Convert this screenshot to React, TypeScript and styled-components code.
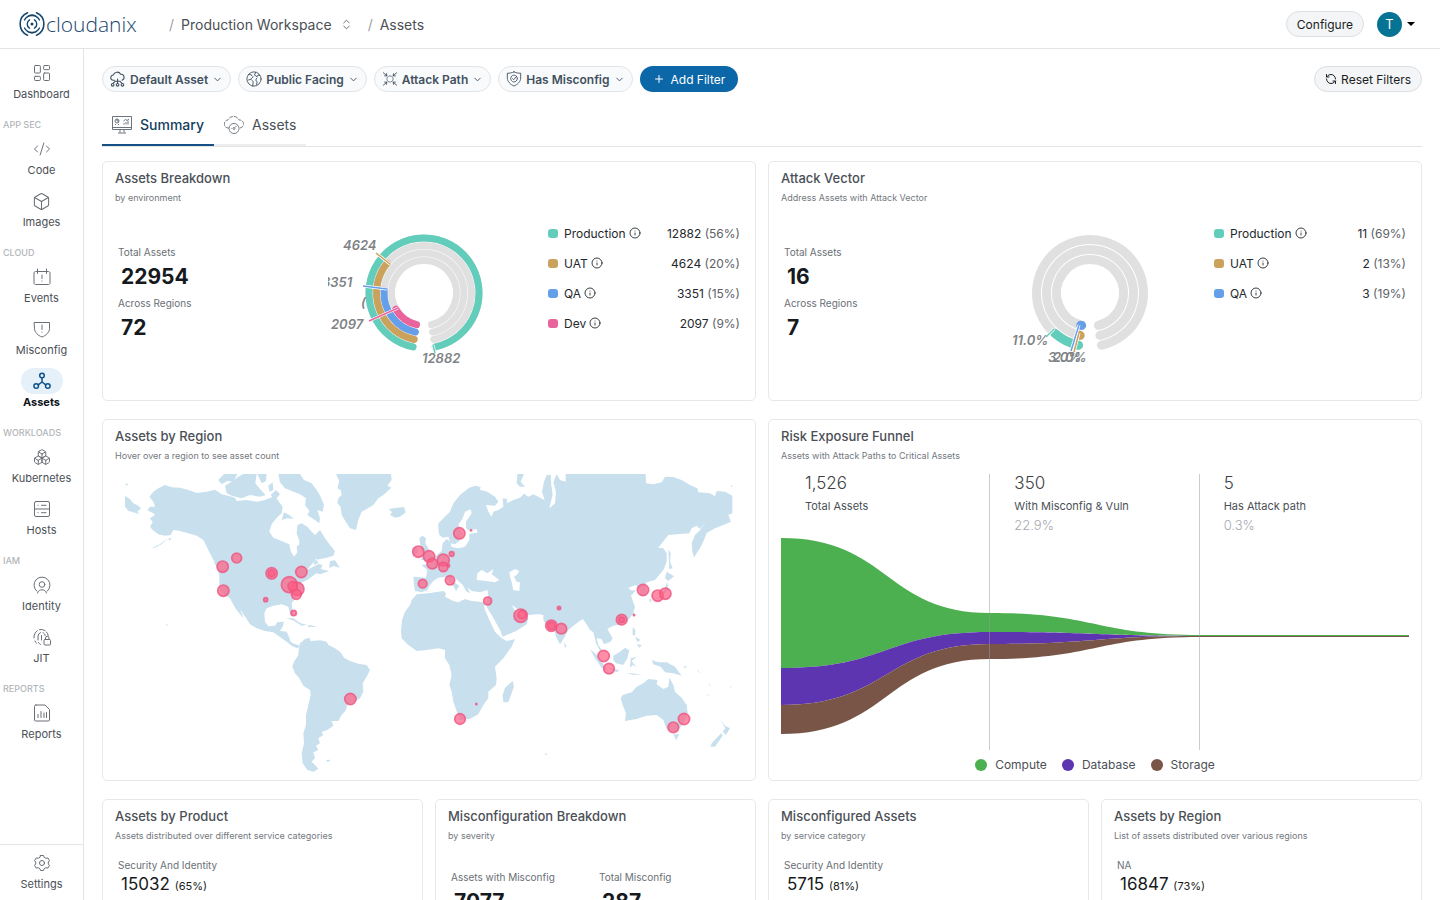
import React from 'react';
import styled, { createGlobalStyle } from 'styled-components';
import { Box, Boxes, ChevronDown, ChevronsUpDown, CodeXml, Info, LayoutDashboard, Plus, RefreshCcw } from 'lucide-react';

const GlobalStyle = createGlobalStyle`
  * {
    box-sizing: border-box;
  }

  body {
    margin: 0;
    background: #fff;
    color: #4b5056;
    font-family: Inter, 'Liberation Sans', sans-serif;
    font-size: 12px;
  }

  button {
    font-family: inherit;
    cursor: pointer;
  }

  a {
    color: inherit;
    text-decoration: none;
  }

  h2, p, ul, dl, dd {
    margin: 0;
    padding: 0;
  }
`;

const Page = styled.div`
  display: flex;
  flex-direction: column;
  height: 100vh;
`;

const TopBar = styled.header`
  display: flex;
  align-items: center;
  flex: 0 0 auto;
  height: 49px;
  padding: 0 25px 0 19px;
  border-bottom: 1px solid #e2e4e6;
`;

const Logo = styled.a`
  display: flex;
  align-items: center;
  width: 150px;
  color: #17466d;
  font-family: 'Open Sans', 'Noto Sans', sans-serif;
  font-size: 21px;
  font-weight: 300;
  line-height: 28px;
`;

const Crumbs = styled.nav`
  display: flex;
  align-items: center;
  gap: 7px;
  flex: 1;
  font-size: 14px;
`;

const Slash = styled.span`
  color: #9a9fa5;
`;

const Switcher = styled.button`
  display: flex;
  align-items: center;
  gap: 8px;
  margin-right: 8px;
  padding: 0;
  border: 0;
  background: none;
  color: inherit;
  font-size: 14px;
`;

const SoftButton = styled.button`
  display: flex;
  align-items: center;
  gap: 4px;
  height: 26px;
  padding: 0 10px;
  border: 1px solid #dcdfe3;
  border-radius: 13px;
  background: #f3f5f7;
  color: #191d22;
  font-size: 12px;
`;

const Account = styled.button`
  display: flex;
  align-items: center;
  gap: 5px;
  margin-left: 13px;
  padding: 0;
  border: 0;
  background: none;
`;

const Avatar = styled.span`
  width: 25px;
  height: 25px;
  border-radius: 50%;
  background: #067394;
  color: #fff;
  font-size: 13px;
  line-height: 25px;
  text-align: center;
`;

const Caret = styled.span`
  border: 4px solid transparent;
  border-top-color: #000;
  border-bottom: 0;
`;

const Shell = styled.div`
  display: flex;
  flex: 1;
  min-height: 0;
`;

const SideBar = styled.nav`
  display: flex;
  flex-direction: column;
  flex: 0 0 84px;
  border-right: 1px solid #e2e4e6;
`;

const SideMain = styled.div`
  flex: 1;
  padding-top: 11px;
`;

const SideFooter = styled.div`
  height: 56px;
  padding-top: 5px;
  border-top: 1px solid #e2e4e6;
`;

const SideHeading = styled.div`
  height: 24px;
  padding-left: 3px;
  color: #b2b6ba;
  font-size: 9px;
  font-weight: 500;
  line-height: 26px;
`;

const SideLink = styled.a<{ $active?: boolean }>`
  display: flex;
  flex-direction: column;
  align-items: center;
  height: 52px;
  color: ${({ $active }) => ($active ? '#10151c' : '#4b5056')};
  font-size: 11px;
  font-weight: ${({ $active }) => ($active ? 700 : 400)};
  line-height: 16px;
`;

const SideIcon = styled.span<{ $active?: boolean }>`
  display: flex;
  align-items: center;
  justify-content: center;
  width: 42px;
  height: 26px;
  border-radius: 13px;
  background: ${({ $active }) => ($active ? '#e6f0f8' : 'none')};
  color: ${({ $active }) => ($active ? '#10538a' : '#6a6f75')};
`;

const Main = styled.main`
  flex: 1;
  min-width: 0;
  padding: 17px 18px;
  overflow-y: auto;
  scrollbar-width: none;
`;

const FilterBar = styled.div`
  display: flex;
  align-items: center;
  gap: 7px;
`;

const Chip = styled.button`
  display: flex;
  align-items: center;
  gap: 4px;
  height: 26px;
  padding: 0 7px;
  border: 1px solid #e1e5e9;
  border-radius: 13px;
  background: #f8fafc;
  color: #42505f;
  font-size: 12px;
  font-weight: 600;
`;

const AddButton = styled.button`
  display: flex;
  align-items: center;
  gap: 6px;
  height: 26px;
  margin-right: auto;
  padding: 0 13px;
  border: 0;
  border-radius: 13px;
  background: #0b67a8;
  color: #fff;
  font-size: 12px;
`;

const Tabs = styled.div`
  display: flex;
  height: 42px;
  margin: 13px 0 14px;
  border-bottom: 1px solid #e2e4e6;
`;

const Tab = styled.button<{ $active?: boolean }>`
  display: flex;
  align-items: center;
  gap: 8px;
  height: 41px;
  padding: 0 10px;
  border: 0;
  border-bottom: 2px solid ${({ $active }) => ($active ? '#155184' : '#eceeef')};
  background: none;
  color: ${({ $active }) => ($active ? '#13405f' : '#4b5056')};
  font-size: 14px;
  font-weight: ${({ $active }) => ($active ? 500 : 400)};
`;

const Cards = styled.div<{ $columns: number }>`
  display: grid;
  grid-template-columns: repeat(${({ $columns }) => $columns}, minmax(0, 1fr));
  gap: 12px;
  margin-bottom: 18px;
`;

const CardBox = styled.section<{ $height: number }>`
  min-height: ${({ $height }) => $height}px;
  padding: 6px 12px 0;
  border: 1px solid #e6e8ea;
  border-radius: 5px;
`;

const CardTitle = styled.h2`
  font-size: 13px;
  font-weight: 500;
  line-height: 20px;
`;

const CardNote = styled.p`
  margin-top: 4px;
  color: #73787e;
  font-size: 9px;
  line-height: 12px;
`;

const BreakdownBody = styled.div`
  display: grid;
  grid-template-columns: 1fr 192px 192px;
  column-gap: 28px;
  padding-right: 3px;
`;

const Stats = styled.dl`
  padding: 40px 3px 0;
`;

const StatLabel = styled.dt`
  margin-top: 4px;
  color: #6a6f75;
  font-size: 10px;
  line-height: 16px;

  &:first-child {
    margin-top: 0;
  }
`;

const StatValue = styled.dd`
  padding: 3px 3px 0;
  color: #161a20;
  font-size: 21px;
  font-weight: 700;
  line-height: 28px;
`;

const Legend = styled.ul`
  padding-top: 14px;
  list-style: none;
`;

const LegendRow = styled.li`
  display: flex;
  align-items: center;
  height: 30px;
  color: #24282d;
  font-size: 12px;
`;

const Swatch = styled.span<{ $color: string }>`
  width: 10px;
  height: 9px;
  margin-right: 6px;
  border-radius: 3px;
  background: ${({ $color }) => $color};
`;

const LegendName = styled.span`
  display: flex;
  align-items: center;
  gap: 3px;
  flex: 1;
`;

const Share = styled.span`
  color: #5c6167;
`;

const DonutSvg = styled.svg`
  width: 192px;
  height: 178px;
  overflow: hidden;
`;

const DonutLabel = styled.text`
  fill: #808386;
  font-size: 13px;
  font-style: italic;
  font-weight: 600;
`;

const MapSvg = styled.svg`
  display: block;
  width: 100%;
  height: 300px;
  margin-top: 12px;
`;

const Funnel = styled.div`
  display: grid;
  grid-template-columns: repeat(3, 1fr);
  grid-template-rows: 276px;
  margin-top: 12px;
`;

const FunnelSvg = styled.svg`
  grid-area: 1 / 1 / 2 / 4;
  width: 100%;
  height: 276px;
`;

const FunnelStep = styled.div<{ $column: number }>`
  grid-area: 1 / ${({ $column }) => $column};
  padding-left: 24px;
  border-right: 1px solid ${({ $column }) => ($column < 3 ? 'rgba(150, 154, 164, 0.5)' : 'transparent')};
  z-index: 1;
`;

const FunnelCount = styled.div`
  color: #3c4043;
  font-size: 17px;
  font-weight: 300;
  line-height: 18px;
`;

const FunnelName = styled.div`
  margin-top: 5px;
  font-size: 11px;
  line-height: 18px;
`;

const FunnelShare = styled.div`
  color: #a5a9af;
  font-size: 13px;
  font-weight: 300;
  line-height: 20px;
`;

const FunnelLegend = styled.div`
  display: flex;
  justify-content: center;
  gap: 15px;
  font-size: 12px;
  line-height: 30px;
`;

const FunnelKey = styled.span<{ $color: string }>`
  display: flex;
  align-items: center;
  gap: 8px;

  &:before {
    content: '';
    width: 12px;
    height: 12px;
    border-radius: 50%;
    background: ${({ $color }) => $color};
  }
`;

const CategoryBox = styled.div`
  padding: 15px 3px 14px;
`;

const CategoryName = styled.div`
  color: #6a6f75;
  font-size: 10px;
  line-height: 16px;
`;

const CategoryValue = styled.div`
  padding-left: 3px;
  color: #161a20;
  font-size: 17px;
  line-height: 22px;
`;

const CategoryShare = styled.span`
  font-size: 11px;
`;

const SeverityStats = styled.div`
  display: grid;
  grid-template-columns: repeat(2, 148px);
  padding: 27px 3px 0;
`;

function Icon({ size = 18, width = 1, children }: { size?: number; width?: number; children: React.ReactNode }) {
  return (
    <svg
      width={size}
      height={size}
      viewBox="0 0 18 18"
      fill="none"
      stroke="currentColor"
      strokeWidth={width}
      strokeLinecap="round"
      strokeLinejoin="round"
      aria-hidden="true"
    >
      {children}
    </svg>
  );
}

const EventsIcon = () => (
  <Icon>
    <path d="M5 3.5H2.5C1.7 3.5 1 4.2 1 5v10c0 .8.7 1.5 1.5 1.500h13c.8 0 1.500-.7 1.500-1.500V5c0-.8-.7-1.500-1.500-1.500H13M5 3.500h8M4.500 1v4.500M13.500 1v4.500M9 7v3.500M9 13v.2" />
  </Icon>
);

const MisconfigIcon = () => (
  <Icon>
    <path d="M1.5 2.5h15v6c0 4-3.500 7-7.500 8.500-4-1.500-7.500-4.500-7.500-8.500zM9 5v4.500M9 12v.2" />
  </Icon>
);

const AssetsIcon = () => (
  <Icon width={1.5}>
    <circle cx="9" cy="3.5" r="2.3" />
    <circle cx="3.2" cy="14" r="2.3" />
    <circle cx="14.8" cy="14" r="2.3" />
    <path d="M9 5.8V10M5.2 12.8 9 10l3.8 2.8" />
  </Icon>
);

const HostsIcon = () => (
  <Icon>
    <rect x="1.5" y="1.5" width="15" height="15" rx="1.5" />
    <path d="M1.5 9h15M5 5.3h.2M8.5 5.3H13M5 12.7h.2M8.5 12.7H13" />
  </Icon>
);

const IdentityIcon = () => (
  <Icon>
    <path d="M3.8 15.2a8 8 0 1 1 10.4 0" />
    <circle cx="9" cy="8.5" r="2.8" />
    <path d="M4.5 17c.6-2 2.3-3.2 4.5-3.2s3.9 1.2 4.5 3.2" />
  </Icon>
);

const JitIcon = () => (
  <Icon>
    <path d="M12 2.5A7.5 7.5 0 0 0 6.5 1.6M4.3 2.7A7.5 7.5 0 0 0 1 8v2M2 13c.4 1 .9 1.7 1.5 2.300M13.500 4c.9 1 1.500 2.200 1.700 3.500M5 12V8a3.800 3.800 0 0 1 2.500-3.400M10 4.700c1.200.5 2 1.500 2.200 2.800M8.500 7.500V12M5.500 14.500c.5.9 1.200 1.500 2 2" />
    <rect x="11" y="11.5" width="6.5" height="5.5" rx="1" />
    <path d="M12.500 11.300V10a1.750 1.750 0 0 1 3.500 0v1.300" />
  </Icon>
);

const ReportsIcon = () => (
  <Icon>
    <path d="M3 1h9l4.500 4.500V16c0 .6-.4 1-1 1h-13c-.6 0-1-.4-1-1V2.500C1.500 1.500 2 1 3 1zM5 13.500v-3M8 13.500v-6M11 13.500V9M13.500 13.500v-5" />
  </Icon>
);

const SettingsIcon = () => (
  <Icon>
    <circle cx="9" cy="9" r="2.5" />
    <path d="M7.5 1.5h3l.6 1.8c.7.4 1.2.7 1.7 1l2-.4 1.700 2.800-1.200 1.300v2l1.200 1.300-1.700 2.800-2-.4-1.700 1-.6 1.800h-3l-.6-1.800-1.700-1-2 .4-1.700-2.800L2.700 10V8L1.500 6.700l1.700-2.800 2 .4 1.700-1z" />
  </Icon>
);

const CloudNodesIcon = () => (
  <Icon size={16} width={1.2}>
    <path d="M5 10.5H4a3 3 0 0 1-.3-6A4.500 4.500 0 0 1 12 3.700a3.400 3.400 0 0 1 1.500 6.600M8.500 9v5M3.500 14l2.500-2.500h5l2.500 2.500" />
    <circle cx="3" cy="15.5" r="1.5" />
    <circle cx="8.5" cy="15.5" r="1.5" />
    <circle cx="14" cy="15.5" r="1.5" />
  </Icon>
);

const GlobeIcon = () => (
  <Icon size={16}>
    <circle cx="9" cy="9" r="8" />
    <path d="M3 4c2-.5 3.500.5 5 2.500-.5 1.500-2 1-2.500 3 1 1.500 3 1.500 2.500 4L7.500 17M11 1.500 9.500 4.500l3 2 1-2 2 .5M12 8c-1.500 1.500-1 3.500.5 4l-.5 3.500M3 10l2-.5" />
  </Icon>
);

const AttackIcon = () => (
  <Icon size={16}>
    <path d="m1.500 2 4 3.500M3 5.500l2.500 0L5 3M16.500 2l-4 3.500M15 5.500h-2.500L13 3M1.500 16l4-3.500M3 12.500h2.500L5 15M16.500 16l-4-3.500M15 12.500h-2.500l.5 2.500" />
    <circle cx="9" cy="9" r="3.500" strokeDasharray="4 1" strokeWidth={0.8} />
  </Icon>
);

const ShieldCheckIcon = () => (
  <Icon size={16}>
    <path d="M9 1c2.500 1.300 5 1.500 7.500 1.500V8c0 4-3.500 7-7.500 9C5 15 1.500 12 1.500 8V2.500C4 2.500 6.500 2.300 9 1z" />
    <circle cx="9" cy="8.500" r="3.800" strokeDasharray="3 1" />
    <path d="m7.300 8.500 1.300 1.300 3-3.500" />
  </Icon>
);

const SummaryIcon = () => (
  <svg width="20" height="20" viewBox="0 0 20 20" fill="none" stroke="#5c6772" strokeWidth="0.9" aria-hidden="true">
    <path d="M.5 1.500h19v13H.5zM.5 12.500h19M8 14.500v3M12 14.500v3M6 18h8" />
    <path d="M3 9.500h1m2 0h1m5 0V8m2 1.500V7m2 2.500V5.500M11.500 6l2-1.500 1.500 1L17 4" />
    <circle cx="5" cy="6" r="2" />
    <path d="M5 6V4M5 6h2" />
  </svg>
);

const CloudGaugeIcon = () => (
  <svg width="20" height="20" viewBox="0 0 20 20" fill="none" stroke="#6a6f75" strokeWidth="0.9" aria-hidden="true">
    <path d="M5 13H4.500a4 4 0 0 1-.5-8A6 6 0 0 1 15 5a4 4 0 0 1 1 8h-1" strokeDasharray="4 1" />
    <circle cx="10" cy="13.500" r="5" />
    <circle cx="10" cy="13.500" r="1" />
    <path d="m11 12.500 1.500-1.500M7 13.500h.5" />
  </svg>
);

const LogoMark = () => (
  <svg width="27" height="26" viewBox="0 0 27 26" fill="none" stroke="currentColor" strokeLinecap="round" aria-hidden="true">
    <path strokeWidth="1.600" d="M8.500 1.800a12.200 12.200 0 0 0 0 22.400M17.500 1.800a12.200 12.200 0 0 1 0 22.400" />
    <path strokeWidth="1.400" d="M5.500 9a8.500 8.500 0 0 1 15 0M5.500 17a8.500 8.500 0 0 0 15 0M9.500 4.800a9 9 0 0 1 7 0M9.500 21.200a9 9 0 0 0 7 0" />
    <path strokeWidth="1.400" d="M10.500 8.800a5 5 0 0 0 0 8.400M15.500 8.800a5 5 0 0 1 0 8.400" />
    <circle cx="13" cy="13" r="1.500" fill="currentColor" stroke="none" />
  </svg>
);

type NavItem = { name: string; icon: React.ReactNode };

const sections: { heading?: string; items: NavItem[] }[] = [
  { items: [{ name: 'Dashboard', icon: <LayoutDashboard size={20} strokeWidth={1.2} /> }] },
  {
    heading: 'APP SEC',
    items: [
      { name: 'Code', icon: <CodeXml size={18} strokeWidth={1.3} /> },
      { name: 'Images', icon: <Box size={19} strokeWidth={1.3} /> },
    ],
  },
  {
    heading: 'CLOUD',
    items: [
      { name: 'Events', icon: <EventsIcon /> },
      { name: 'Misconfig', icon: <MisconfigIcon /> },
      { name: 'Assets', icon: <AssetsIcon /> },
    ],
  },
  {
    heading: 'WORKLOADS',
    items: [
      { name: 'Kubernetes', icon: <Boxes size={18} strokeWidth={1.3} /> },
      { name: 'Hosts', icon: <HostsIcon /> },
    ],
  },
  {
    heading: 'IAM',
    items: [
      { name: 'Identity', icon: <IdentityIcon /> },
      { name: 'JIT', icon: <JitIcon /> },
    ],
  },
  { heading: 'REPORTS', items: [{ name: 'Reports', icon: <ReportsIcon /> }] },
];

const filters = [
  { name: 'Default Asset', icon: <CloudNodesIcon /> },
  { name: 'Public Facing', icon: <GlobeIcon /> },
  { name: 'Attack Path', icon: <AttackIcon /> },
  { name: 'Has Misconfig', icon: <ShieldCheckIcon /> },
];

type Ring = { color: string; r: number; end: number };
type Callout = { text: string; x: number; y: number; color: string; line: string };
type Env = { name: string; color: string; count: string; share: string };

const teal = '#63cdbb';
const sand = '#cba25c';
const blue = '#659fea';
const pink = '#e9649c';

const envs: Env[] = [
  { name: 'Production', color: teal, count: '12882', share: '56%' },
  { name: 'UAT', color: sand, count: '4624', share: '20%' },
  { name: 'QA', color: blue, count: '3351', share: '15%' },
  { name: 'Dev', color: pink, count: '2097', share: '9%' },
];

const envRings: Ring[] = [
  { color: teal, r: 55, end: 347 },
  { color: sand, r: 47.5, end: 129 },
  { color: blue, r: 40, end: 94 },
  { color: pink, r: 32.5, end: 60 },
];

const envCallouts: Callout[] = [
  { text: '4624', x: 15, y: 46, color: sand, line: 'M48 49 62 60' },
  { text: '3351', x: -6, y: 83, color: blue, line: 'M35 82 59 85' },
  { text: '(', x: 33, y: 103, color: 'none', line: '' },
  { text: '2097', x: 3, y: 125, color: pink, line: 'M41 117 70 104' },
  { text: '12882', x: 94, y: 159, color: teal, line: 'M105 141 107 149' },
];

const vectorEnvs: Env[] = [
  { name: 'Production', color: teal, count: '11', share: '69%' },
  { name: 'UAT', color: sand, count: '2', share: '13%' },
  { name: 'QA', color: blue, count: '3', share: '19%' },
];

const vectorRings: Ring[] = [
  { color: teal, r: 53.5, end: 41 },
  { color: sand, r: 43.5, end: 14 },
  { color: blue, r: 33.5, end: 16 },
];

const vectorCallouts: Callout[] = [
  { text: '11.0%', x: 18, y: 141, color: teal, line: 'M52 133 60 125' },
  { text: '3.0%', x: 54, y: 158, color: blue, line: 'M85 121 77 147' },
  { text: '2.0%', x: 59, y: 158, color: sand, line: 'M85 129 80 148' },
];

// angles run clockwise from the bottom of the circle
function arc(r: number, from: number, to: number) {
  const at = (deg: number) => {
    const a = (deg * Math.PI) / 180;
    return `${96 - r * Math.sin(a)} ${89 + r * Math.cos(a)}`;
  };
  return `M${at(from)}A${r} ${r} 0 ${to - from > 180 ? 1 : 0} 1 ${at(to)}`;
}

function Donut({ rings, width, callouts }: { rings: Ring[]; width: number; callouts: Callout[] }) {
  return (
    <DonutSvg viewBox="0 0 192 178">
      {rings.map(({ r, end, color }) => {
        // keeps the round caps of every ring the same distance from the opening
        const start = 9 + (width * 20) / r;
        return (
          <g key={r} fill="none" strokeWidth={width} strokeLinecap="round">
            <path d={arc(r, start, 360 - start)} stroke="#e0e0e0" />
            <path d={arc(r, Math.min(start, end), end)} stroke={color} />
          </g>
        );
      })}
      {callouts.map(({ line, color }) => (
        <g key={color} fill="none">
          <path d={line} stroke="#fff" strokeWidth={3} />
          <path d={line} stroke={color} strokeWidth={1.5} />
        </g>
      ))}
      {callouts.map(({ text, x, y }) => (
        <DonutLabel key={text} x={x} y={y}>
          {text}
        </DonutLabel>
      ))}
    </DonutSvg>
  );
}

const west = [
  'M148 95 160 80 175 70 195 60 215 67 240 68 265 75 290 84 320 80 345 74 365 88 385 92 405 98 410 108 440 105 470 110 495 105 515 97 525 90 535 108 548 125 545 145 530 158 515 178 508 200 520 218 545 228 568 238 572 258 582 275 592 262 590 245 598 238 598 228 590 205 592 180 605 175 622 185 635 200 645 210 660 195 675 220 690 240 705 258 700 272 680 278 650 284 635 298 622 314 640 305 655 297 668 300 662 312 688 318 660 328 650 325 635 335 622 345 600 355 612 370 590 395 575 415 578 440 578 455 570 446 565 425 545 418 520 422 500 430 493 445 495 470 505 484 525 482 532 472 552 470 548 485 540 498 560 500 568 518 572 530 582 536 600 542 592 550 575 542 560 530 540 516 520 502 495 498 470 490 450 478 440 462 425 440 405 415 394 400 402 410 418 430 432 460 422 450 405 428 390 400 380 392 362 382 358 365 358 330 350 300 340 285 325 255 310 225 290 212 265 205 240 198 220 195 212 210 195 212 175 208 158 195 150 185 158 172 150 160 165 150 160 145 142 136 150 125 165 125 160 110Z',
  'M355 45 372 27 412 27 400 50 382 48 365 58ZM375 62 395 50 415 35 430 27 470 27 466 55 480 72 497 90 480 95 450 90 425 100 395 92 380 85ZM472 27 500 27 498 48 485 55ZM505 62 518 52 520 75 508 80ZM512 90 528 75 540 88 525 105Z',
  'M535 27 600 27 612 45 635 55 650 75 662 95 672 120 668 140 652 135 660 160 658 175 640 162 622 150 628 138 615 120 618 100 600 88 575 78 555 70 540 52Z',
  'M552 142 568 150 582 162 562 160 545 165ZM648 280 640 300 655 295ZM690 288 705 286 720 308 700 303 688 310ZM340 290 362 300 370 320 352 308Z',
  'M708 27 873 27 875 45 862 62 874 68 850 90 835 100 820 120 800 132 785 140 775 165 768 195 750 190 738 172 725 150 722 125 712 115 715 100 725 90 722 75 712 70 718 48Z',
  'M866 132 890 128 912 126 917 142 900 155 885 158 870 150 876 142Z',
  'M75 93 90 102 100 115 115 122 123 130 112 140 118 148 100 142 85 138 75 125ZM76 55 86 58 78 62ZM155 250 180 238 205 218 185 238 165 248ZM205 220 215 220 208 228ZM198 476 204 480 200 484Z',
  'M560 460 580 460 600 474 622 480 625 486 650 486 640 482 618 480 605 482 582 467Z',
  'M600 535 615 522 628 518 632 528 660 526 680 530 685 540 705 550 722 562 732 578 750 588 775 596 800 600 810 615 800 635 788 655 790 680 780 700 762 712 742 718 738 735 725 750 715 768 695 768 700 782 682 795 665 800 670 810 655 820 660 835 648 842 655 855 640 862 645 880 635 890 650 905 655 912 640 920 622 915 608 895 605 865 612 835 610 805 618 780 618 750 625 720 632 690 630 675 610 662 598 640 585 625 577 605 582 590 595 570 597 548Z',
  'M678 885 692 884 684 892Z',
];

const east = [
  'M115 195 115 175 130 160 150 140 160 115 180 90 205 70 225 62 242 66 240 74 262 80 285 95 295 110 285 122 258 120 265 140 275 155 280 140 295 135 310 125 308 100 322 102 320 115 340 105 360 98 372 86 385 95 400 88 415 95 434 106 426 80 432 50 440 30 452 30 454 60 458 90 448 130 465 115 468 80 460 52 470 27 480 45 497 50 497 27 737 27 738 55 760 58 785 52 795 35 820 36 845 45 870 60 892 70 895 82 930 85 945 94 950 78 975 80 997 92 997 145 985 150 993 170 970 180 945 190 920 204 912 225 900 250 882 277 877 260 875 235 885 210 900 195 918 170 900 192 890 182 875 190 868 205 840 207 805 210 775 248 790 250 800 265 800 290 790 315 765 345 740 352 735 362 742 378 735 392 722 390 718 372 708 360 685 368 692 376 708 376 693 392 705 425 700 445 685 465 665 478 640 482 622 492 638 520 632 530 612 538 604 522 590 520 595 540 608 558 600 558 588 535 580 502 570 495 560 478 548 462 530 475 505 495 492 520 480 538 470 520 462 495 445 488 430 465 430 450 415 448 385 450 365 440 335 420 350 445 385 460 380 478 350 497 308 515 300 495 278 455 262 430 258 415 265 390 262 375 240 382 215 378 203 368 210 385 200 380 188 360 172 345 155 332 160 350 178 362 168 378 160 362 145 348 135 336 115 338 100 348 90 360 82 375 65 382 45 378 42 360 40 335 78 338 82 315 65 300 80 298 90 285 110 270 125 258 128 235 140 222 150 230 145 215 128 218 118 210Z',
  'M58 218 68 212 78 220 76 235 85 250 100 275 82 286 62 285 72 268 62 250ZM36 252 50 244 55 262 40 275Z',
  'M50 388 90 384 130 378 138 385 135 395 160 408 175 412 195 402 215 408 252 412 254 432 268 465 285 500 305 520 320 528 345 522 335 545 310 580 285 605 290 640 288 660 265 680 265 700 250 720 235 748 210 762 180 765 172 745 160 710 155 680 148 660 155 630 148 600 135 580 135 555 115 550 80 555 50 558 25 540 5 520 3 500 6 465 15 440 30 420 35 405Z',
  'M338 648 342 665 325 712 310 712 308 690 315 668Z',
  'M350 55 352 27 372 27 362 50 375 65 360 65ZM492 532 500 543 495 549ZM805 252 812 265 810 290 818 310 808 312ZM800 320 822 334 805 348 795 340ZM802 350 805 375 780 400 765 402 785 390ZM748 398 755 405 750 415ZM698 440 704 448 700 456Z',
  'M570 552 590 570 612 600 625 620 605 608 585 580ZM625 610 660 615 650 622ZM640 572 660 560 675 548 688 556 682 580 670 600 648 595 640 585ZM692 580 710 575 695 588 708 605 698 600 690 608ZM698 486 706 495 705 512 698 510ZM705 515 722 525 712 530ZM710 538 726 540 718 548ZM755 585 775 592 800 592 825 605 845 632 820 625 795 622 782 605 760 598ZM680 624 725 628 700 630Z',
  'M662 700 668 690 695 682 710 665 730 655 745 642 772 645 770 658 790 672 805 665 808 638 820 660 825 680 845 698 860 720 863 745 852 772 835 795 822 802 800 792 790 765 770 750 740 752 710 762 675 768 678 745 668 720Z',
  'M820 808 838 808 828 826ZM962 766 975 782 990 790 978 810 968 800 976 790ZM964 804 968 812 945 845 932 845 935 835ZM918 685 932 695 925 692ZM928 652 932 665 928 660ZM985 672 1000 660 992 668ZM850 606 862 602 855 610ZM870 598 885 608 880 605ZM890 612 905 628 895 620ZM435 864 443 868 436 871ZM992 60 998 64 993 66Z',
];

const seas = [
  'M212 133 215 145 198 170 198 188 203 195 230 193 232 203 208 206 208 225 195 245 175 250 155 246 152 235 165 238 178 228 190 205 185 200 175 180 188 160 195 140Z',
  'M230 345 232 325 245 315 262 325 280 312 275 328 298 345 285 352 260 348ZM328 322 345 312 358 318 350 330 342 335 350 350 360 352 358 378 340 375 335 352 330 335Z',
];

const dots = [
  [410, 279, 15], [368, 305, 17], [370, 377, 17], [515, 325, 17], [515, 325, 10], [604, 321, 17], [568, 359, 24],
  [592, 372, 20], [589, 388, 15], [578, 364, 14], [497, 404, 6], [581, 444, 8], [751, 702, 17],
  [955, 260, 17], [987, 274, 17], [997, 296, 16], [1030, 285, 18], [1030, 306, 14], [1055, 267, 7], [1045, 302, 4],
  [1078, 205, 17], [1113, 196, 2], [968, 356, 13], [1050, 346, 14], [1163, 408, 12], [1262, 452, 20], [1266, 449, 12],
  [1377, 429, 5], [1354, 482, 17], [1354, 482, 11], [1384, 491, 16], [1565, 464, 16], [1565, 464, 8], [1602, 450, 2],
  [1629, 375, 17], [1673, 392, 17], [1696, 386, 17], [1511, 573, 17], [1527, 611, 16], [1129, 717, 2],
  [1080, 762, 16], [1752, 762, 17], [1720, 787, 16],
];

function WorldMap() {
  return (
    <MapSvg viewBox="45 27 1884 900" role="img" aria-label="Assets by region">
      <path d={west.join('')} fill="#c8e0ee" />
      <g transform="translate(900 0)">
        <path d={east.join('')} fill="#c8e0ee" />
        <path d={seas.join('')} fill="#fff" />
      </g>
      <g fill="#ff5c83" fillOpacity={0.7} stroke="#ee5580" strokeOpacity={0.8} strokeWidth={5}>
        {dots.map(([x, y, r], index) => (
          <circle key={index} cx={x} cy={y} r={r} />
        ))}
      </g>
    </MapSvg>
  );
}

// the y of every band edge at the start, after the first step and at the end
const edges = [
  [64, 139, 161],
  [194, 158, 162],
  [231, 170, 162],
  [260, 185, 163],
];

const bandColors = ['#4caf50', '#5e35b1', '#795548'];

function band(top: number[], bottom: number[]) {
  return [
    `M0 ${top[0]}C108 ${top[0]} 104 ${top[1]} 209 ${top[1]}S314 ${top[2]} 419 ${top[2]}H628`,
    `V${bottom[2]}H419C314 ${bottom[2]} 314 ${bottom[1]} 209 ${bottom[1]}S108 ${bottom[0]} 0 ${bottom[0]}Z`,
  ].join('');
}

const steps = [
  { count: '1,526', name: 'Total Assets', share: '' },
  { count: '350', name: 'With Misconfig & Vuln', share: '22.9%' },
  { count: '5', name: 'Has Attack path', share: '0.3%' },
];

function Card({ title, note, height, children }: { title: string; note: string; height: number; children: React.ReactNode }) {
  return (
    <CardBox $height={height}>
      <CardTitle>{title}</CardTitle>
      <CardNote>{note}</CardNote>
      {children}
    </CardBox>
  );
}

function Breakdown({ total, regions, list, children }: { total: string; regions: string; list: Env[]; children: React.ReactNode }) {
  return (
    <BreakdownBody>
      <Stats>
        <StatLabel>Total Assets</StatLabel>
        <StatValue>{total}</StatValue>
        <StatLabel>Across Regions</StatLabel>
        <StatValue>{regions}</StatValue>
      </Stats>
      {children}
      <Legend>
        {list.map((env) => (
          <LegendRow key={env.name}>
            <Swatch $color={env.color} />
            <LegendName>
              {env.name}
              <Info size={12} strokeWidth={1.8} />
            </LegendName>
            <span>
              {env.count} <Share>({env.share})</Share>
            </span>
          </LegendRow>
        ))}
      </Legend>
    </BreakdownBody>
  );
}

function Category({ name, value, share }: { name: string; value: string; share: string }) {
  return (
    <CategoryBox>
      <CategoryName>{name}</CategoryName>
      <CategoryValue>
        {value} <CategoryShare>({share})</CategoryShare>
      </CategoryValue>
    </CategoryBox>
  );
}

export default function App() {
  return (
    <Page>
      <GlobalStyle />
      <TopBar>
        <Logo href="#">
          <LogoMark />
          cloudanix
        </Logo>
        <Crumbs>
          <Slash>/</Slash>
          <Switcher>
            Production Workspace
            <ChevronsUpDown size={13} strokeWidth={1.5} />
          </Switcher>
          <Slash>/</Slash>
          <a href="#assets">Assets</a>
        </Crumbs>
        <SoftButton>Configure</SoftButton>
        <Account aria-label="Account">
          <Avatar>T</Avatar>
          <Caret />
        </Account>
      </TopBar>
      <Shell>
        <SideBar>
          <SideMain>
            {sections.map(({ heading, items }) => (
              <React.Fragment key={heading || 'top'}>
                {heading && <SideHeading>{heading}</SideHeading>}
                {items.map(({ name, icon }) => (
                  <SideLink key={name} href={`#${name.toLowerCase()}`} $active={name === 'Assets'}>
                    <SideIcon $active={name === 'Assets'}>{icon}</SideIcon>
                    {name}
                  </SideLink>
                ))}
              </React.Fragment>
            ))}
          </SideMain>
          <SideFooter>
            <SideLink href="#settings">
              <SideIcon>
                <SettingsIcon />
              </SideIcon>
              Settings
            </SideLink>
          </SideFooter>
        </SideBar>
        <Main>
          <FilterBar>
            {filters.map(({ name, icon }) => (
              <Chip key={name}>
                {icon}
                {name}
                <ChevronDown size={11} strokeWidth={2} />
              </Chip>
            ))}
            <AddButton>
              <Plus size={12} />
              Add Filter
            </AddButton>
            <SoftButton>
              <RefreshCcw size={12} />
              Reset Filters
            </SoftButton>
          </FilterBar>
          <Tabs role="tablist">
            <Tab role="tab" aria-selected $active>
              <SummaryIcon />
              Summary
            </Tab>
            <Tab role="tab" aria-selected={false}>
              <CloudGaugeIcon />
              Assets
            </Tab>
          </Tabs>
          <Cards $columns={2}>
            <Card title="Assets Breakdown" note="by environment" height={240}>
              <Breakdown total="22954" regions="72" list={envs}>
                <Donut rings={envRings} width={7} callouts={envCallouts} />
              </Breakdown>
            </Card>
            <Card title="Attack Vector" note="Address Assets with Attack Vector" height={240}>
              <Breakdown total="16" regions="7" list={vectorEnvs}>
                <Donut rings={vectorRings} width={9} callouts={vectorCallouts} />
              </Breakdown>
            </Card>
          </Cards>
          <Cards $columns={2}>
            <Card title="Assets by Region" note="Hover over a region to see asset count" height={362}>
              <WorldMap />
            </Card>
            <Card title="Risk Exposure Funnel" note="Assets with Attack Paths to Critical Assets" height={362}>
              <Funnel>
                <FunnelSvg viewBox="0 0 628 276" preserveAspectRatio="none">
                  {bandColors.map((color, index) => (
                    <path key={color} d={band(edges[index], edges[index + 1])} fill={color} />
                  ))}
                </FunnelSvg>
                {steps.map(({ count, name, share }, index) => (
                  <FunnelStep key={name} $column={index + 1}>
                    <FunnelCount>{count}</FunnelCount>
                    <FunnelName>{name}</FunnelName>
                    <FunnelShare>{share}</FunnelShare>
                  </FunnelStep>
                ))}
              </Funnel>
              <FunnelLegend>
                <FunnelKey $color={bandColors[0]}>Compute</FunnelKey>
                <FunnelKey $color={bandColors[1]}>Database</FunnelKey>
                <FunnelKey $color={bandColors[2]}>Storage</FunnelKey>
              </FunnelLegend>
            </Card>
          </Cards>
          <Cards $columns={4}>
            <Card title="Assets by Product" note="Assets distributed over different service categories" height={240}>
              <Category name="Security And Identity" value="15032" share="65%" />
            </Card>
            <Card title="Misconfiguration Breakdown" note="by severity" height={240}>
              <SeverityStats>
                <dl>
                  <StatLabel>Assets with Misconfig</StatLabel>
                  <StatValue>7077</StatValue>
                </dl>
                <dl>
                  <StatLabel>Total Misconfig</StatLabel>
                  <StatValue>287</StatValue>
                </dl>
              </SeverityStats>
            </Card>
            <Card title="Misconfigured Assets" note="by service category" height={240}>
              <Category name="Security And Identity" value="5715" share="81%" />
            </Card>
            <Card title="Assets by Region" note="List of assets distributed over various regions" height={240}>
              <Category name="NA" value="16847" share="73%" />
            </Card>
          </Cards>
        </Main>
      </Shell>
    </Page>
  );
}
